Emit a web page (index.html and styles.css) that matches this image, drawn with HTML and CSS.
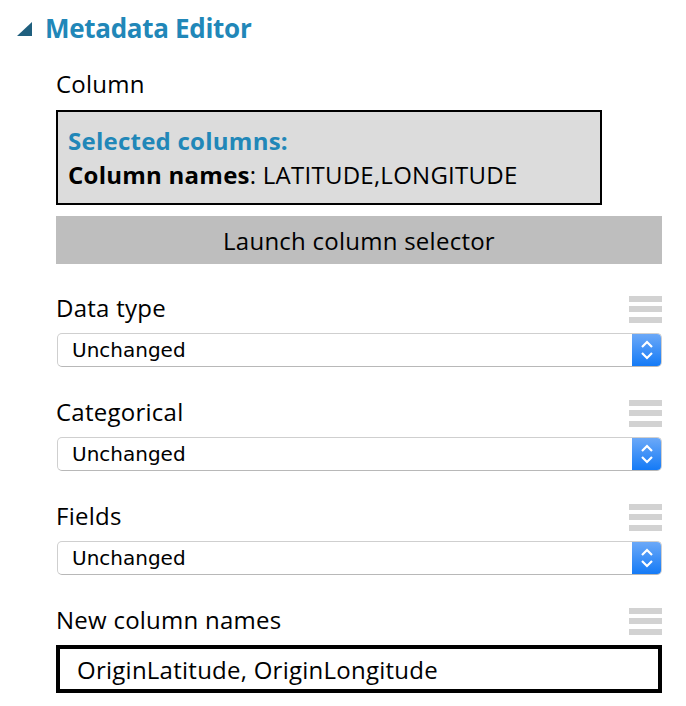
FILE: index.html
```html
<!DOCTYPE html>
<html>
<head>
<meta charset="utf-8">
<link rel="stylesheet" href="styles.css">
</head>
<body>
<div class="panel">
  <div class="header">
    <svg class="caret" width="16" height="15" viewBox="0 0 16 15"><polygon points="0,14 15,14 15,0" fill="#1f5f7e"/></svg>
    <span class="title">Metadata Editor</span>
  </div>
  <div class="content">
    <div class="col-label">Column</div>
    <div class="selbox">
      <div class="sel-title">Selected columns:</div>
      <div class="sel-names"><b>Column names</b>: LATITUDE,LONGITUDE</div>
    </div>
    <div class="launch">Launch column selector</div>

    <div class="field">
      <div class="field-head"><span class="field-label">Data type</span><span class="grip"><i></i><i></i><i></i></span></div>
      <div class="select"><span class="select-text">Unchanged</span><span class="stepper"><svg width="14" height="22" viewBox="0 0 14 22"><polyline points="2,8 7,3 12,8" fill="none" stroke="#fff" stroke-width="2.2"/><polyline points="2,14 7,19 12,14" fill="none" stroke="#fff" stroke-width="2.2"/></svg></span></div>
    </div>
    <div class="field">
      <div class="field-head"><span class="field-label">Categorical</span><span class="grip"><i></i><i></i><i></i></span></div>
      <div class="select"><span class="select-text">Unchanged</span><span class="stepper"><svg width="14" height="22" viewBox="0 0 14 22"><polyline points="2,8 7,3 12,8" fill="none" stroke="#fff" stroke-width="2.2"/><polyline points="2,14 7,19 12,14" fill="none" stroke="#fff" stroke-width="2.2"/></svg></span></div>
    </div>
    <div class="field">
      <div class="field-head"><span class="field-label">Fields</span><span class="grip"><i></i><i></i><i></i></span></div>
      <div class="select"><span class="select-text">Unchanged</span><span class="stepper"><svg width="14" height="22" viewBox="0 0 14 22"><polyline points="2,8 7,3 12,8" fill="none" stroke="#fff" stroke-width="2.2"/><polyline points="2,14 7,19 12,14" fill="none" stroke="#fff" stroke-width="2.2"/></svg></span></div>
    </div>
    <div class="field">
      <div class="field-head"><span class="field-label">New column names</span><span class="grip"><i></i><i></i><i></i></span></div>
      <div class="text-input">OriginLatitude, OriginLongitude</div>
    </div>
  </div>
</div>
</body>
</html>
```

FILE: styles.css
```css
html, body {
  margin: 0;
  padding: 0;
  background: #ffffff;
}
body {
  font-family: "Open Sans", "Noto Sans", sans-serif;
  color: #000;
  width: 686px;
  height: 706px;
  overflow: hidden;
}
.panel {
  display: flex;
  flex-direction: column;
}
.header {
  display: flex;
  align-items: center;
  height: 56px;
  padding-left: 17px;
  gap: 12px;
}
.caret {
  display: block;
  margin-top: 2px;
}
.title {
  font-size: 26px;
  font-weight: 700;
  color: #2187b8;
  letter-spacing: -0.3px;
}
.content {
  display: flex;
  flex-direction: column;
  margin-left: 56px;
  width: 606px;
  font-size: 24px;
  letter-spacing: 0.25px;
}
.col-label {
  height: 54px;
  line-height: 30px;
  padding-top: 13px;
  box-sizing: border-box;
}
.selbox {
  width: 546px;
  height: 95px;
  box-sizing: border-box;
  border: 2px solid #000;
  background: #dcdcdc;
  padding: 12px 0 0 10px;
  line-height: 34px;
}
.sel-title {
  font-weight: 700;
  color: #2187b8;
}
.sel-names b {
  font-weight: 700;
}
.launch {
  margin-top: 11px;
  height: 48px;
  background: #bebebe;
  display: flex;
  align-items: center;
  justify-content: center;
}
.field {
  display: flex;
  flex-direction: column;
  margin-top: 31px;
}
.field + .field {
  margin-top: 32px;
}
.field-head {
  display: flex;
  justify-content: space-between;
  align-items: center;
  height: 28px;
  margin-bottom: 10px;
}
.field-label {
  line-height: 28px;
  margin-top: -2px;
}
.grip {
  display: flex;
  flex-direction: column;
  justify-content: space-between;
  width: 33px;
  height: 27px;
}
.grip i {
  display: block;
  height: 6px;
  background: #d2d2d2;
}
.select {
  display: flex;
  align-items: center;
  height: 34px;
  margin-left: 1px;
  box-sizing: border-box;
  border: 1px solid #cfcfcf;
  border-bottom-color: #b8b8b8;
  border-radius: 5px;
  background: #fff;
  overflow: hidden;
}
.select-text {
  flex: 1;
  padding-left: 14px;
  font-family: "DejaVu Sans", "Liberation Sans", sans-serif;
  font-size: 20px;
  letter-spacing: 0;
}
.stepper {
  width: 30px;
  align-self: stretch;
  margin: -1px -1px -1px 0;
  display: flex;
  align-items: center;
  justify-content: center;
  background: linear-gradient(#6eaaf8, #1279f6);
  border-radius: 0 5px 5px 0;
}
.stepper svg {
  display: block;
}
.text-input {
  height: 48px;
  box-sizing: border-box;
  border: 4px solid #000;
  padding-left: 17px;
  display: flex;
  align-items: center;
}
```
